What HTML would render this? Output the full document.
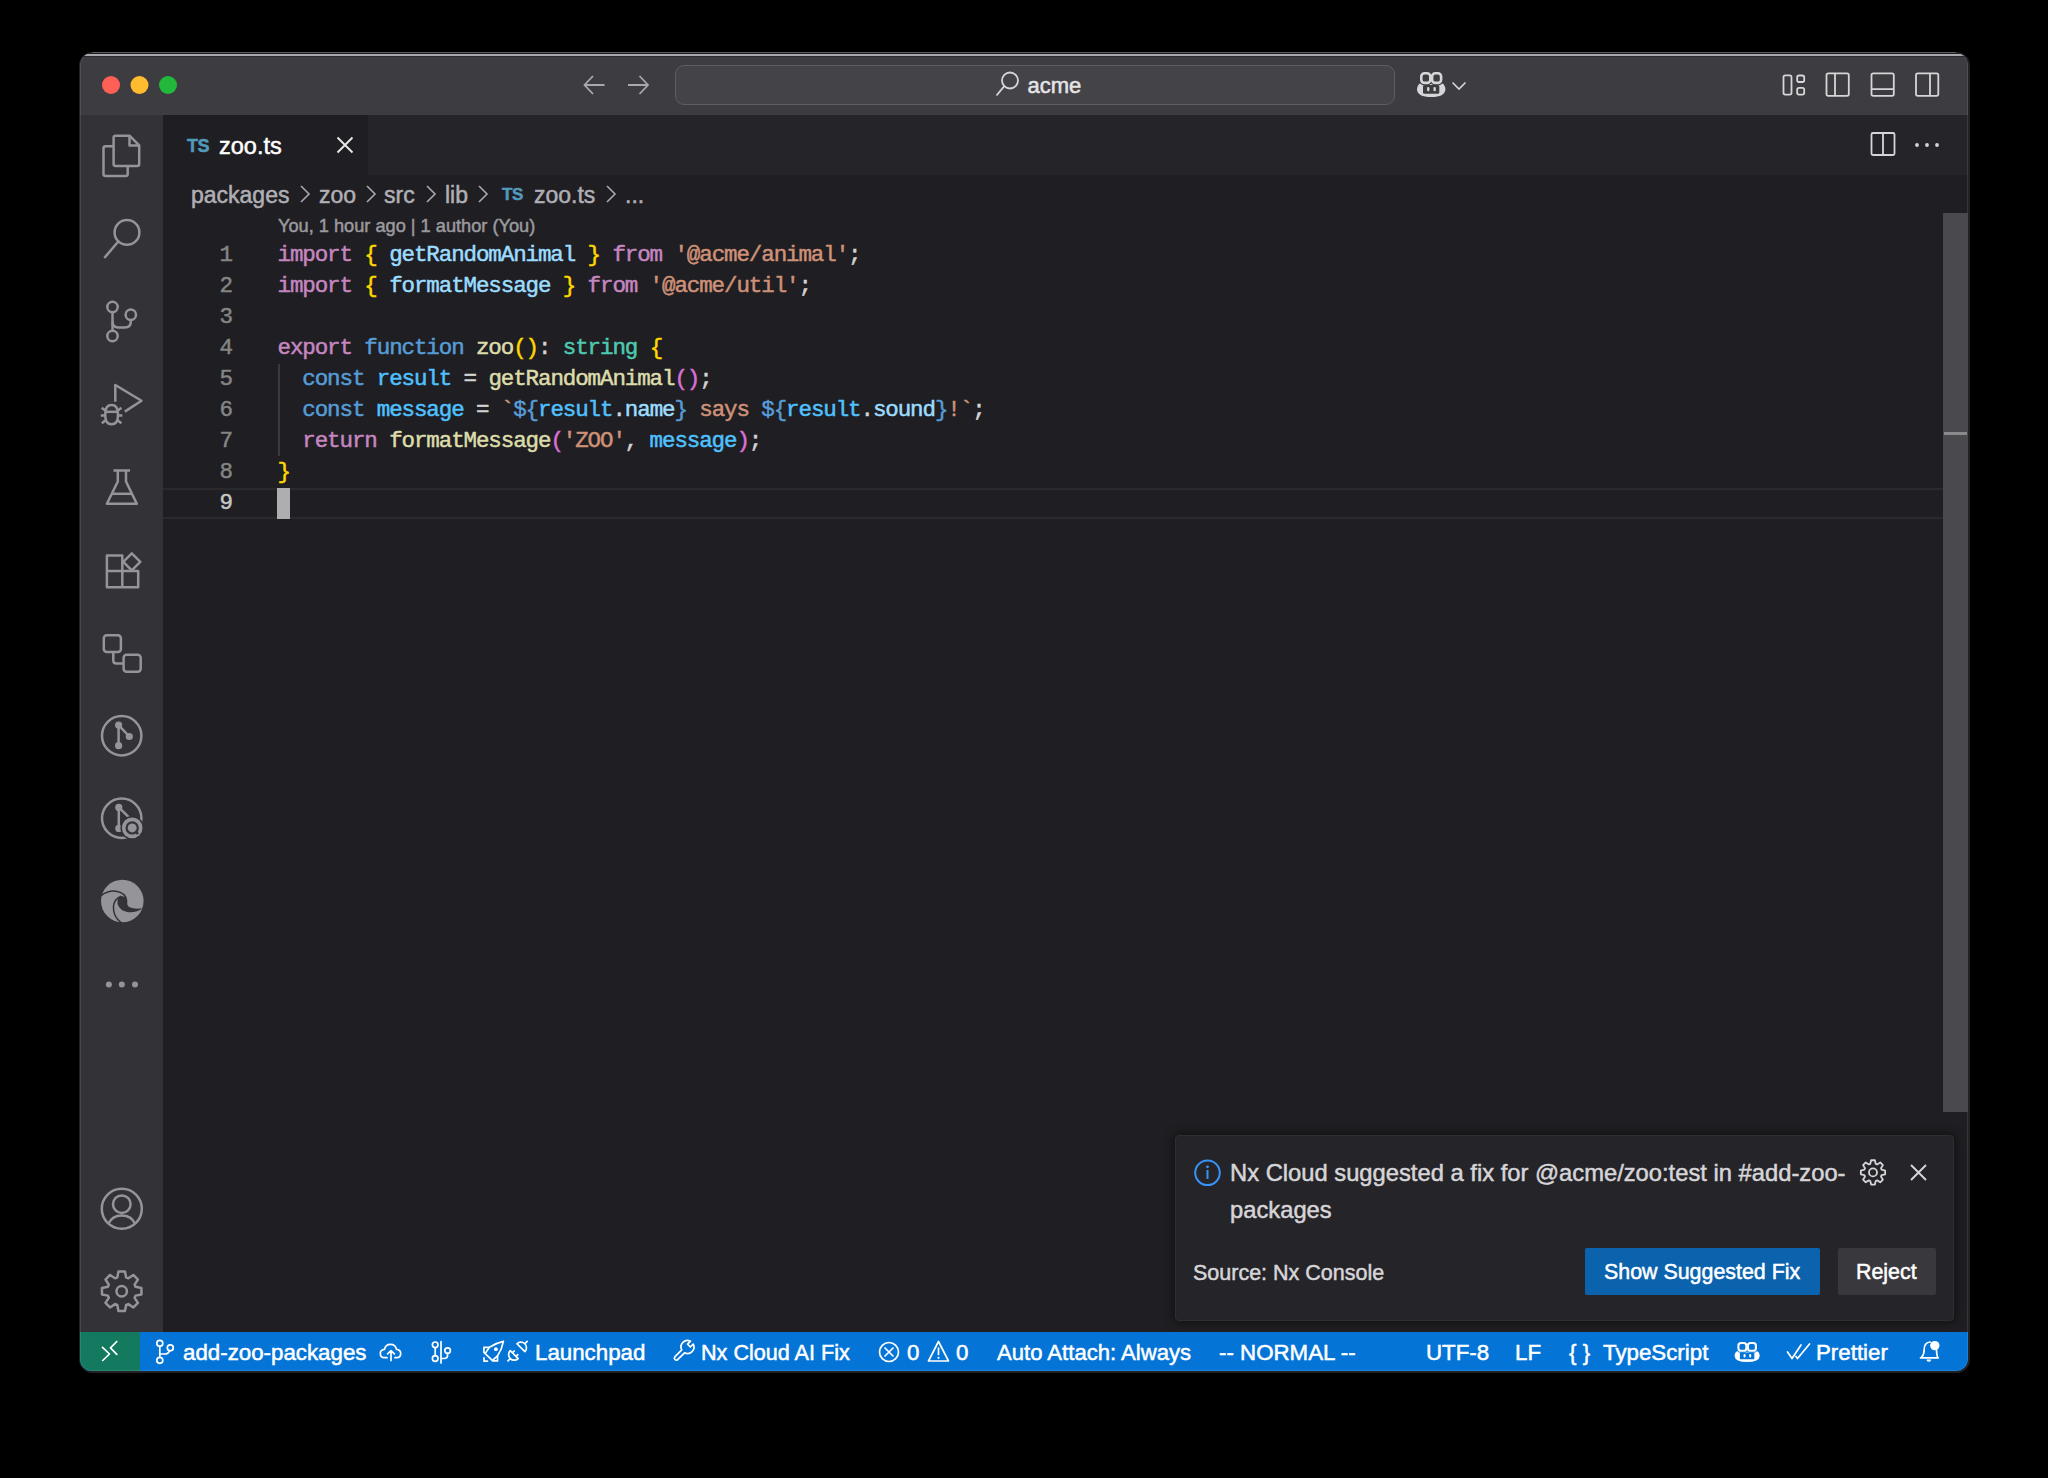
<!DOCTYPE html>
<html><head><meta charset="utf-8"><style>
*{margin:0;padding:0;box-sizing:border-box}
html,body{width:2048px;height:1478px;background:#000;overflow:hidden;font-family:"Liberation Sans",sans-serif;-webkit-text-stroke:0.5px}
.a{position:absolute}
#win{position:absolute;left:0;top:0;width:2048px;height:1478px;clip-path:inset(53px 80px 107px 80px round 12px);background:#1f1e22}
#title{left:80px;top:53px;width:1888px;height:62px;background:#3d3c40}
#act{left:80px;top:115px;width:83px;height:1217px;background:#333236}
#tabs{left:163px;top:115px;width:1805px;height:60px;background:#252428}
#tab{left:163px;top:115px;width:205px;height:60px;background:#1f1e22}
#status{left:80px;top:1332px;width:1888px;height:39px;background:#0474d6}
#remote{left:80px;top:1332px;width:60px;height:39px;background:#137a5f}
.t1{position:absolute;white-space:pre;line-height:1}
.code{position:absolute;left:277.5px;margin-top:0.2px;letter-spacing:-1.1px;font-family:"Liberation Mono",monospace;font-size:22.5px;line-height:31px;white-space:pre;color:#d4d4d4}
.ln{position:absolute;left:183px;margin-top:0.2px;width:50px;text-align:right;font-family:"Liberation Mono",monospace;font-size:22.5px;line-height:31px;color:#858585}
.k{color:#c586c0}.f{color:#dcdcaa}.v{color:#9cdcfe}.s{color:#ce9178}.b{color:#569cd6}.tt{color:#4ec9b0}.y{color:#ffd700}.o{color:#da70d6}.c{color:#4fc1ff}
.sb{position:absolute;top:1341.6px;font-size:22.3px;color:#fff;white-space:pre;line-height:1}
svg{position:absolute;left:0;top:0;overflow:visible}
</style></head><body>
<div class="a" style="left:78.5px;top:51.5px;width:1891px;height:1321px;border-radius:13.5px;background:#222124"></div>
<div class="a" style="left:92px;top:52px;width:1864px;height:1px;background:#5e5d61"></div>
<div id="win">
<div id="title" class="a"></div><div id="act" class="a"></div><div id="tabs" class="a"></div><div id="tab" class="a"></div><div id="status" class="a"></div><div id="remote" class="a"></div>
<div class="a" style="left:80px;top:53px;width:1888px;height:1318px;border-radius:12px;box-shadow:inset 0 0 0 1px rgba(255,255,255,0.10)"></div>
<div class="a" style="left:80px;top:53px;width:1888px;height:1px;background:#1c1b1e"></div><div class="a" style="left:80px;top:54px;width:1888px;height:2px;background:#a8a7ab"></div><div class="a" style="left:80px;top:56px;width:1888px;height:1px;background:#2c2b2e"></div>
<div class="a" style="left:675px;top:65px;width:720px;height:40px;border-radius:9px;border:1.5px solid #5e5d61;background:#444347"></div>
<div class="t1" style="left:1027.5px;top:75px;font-size:22px;color:#e6e5e8;">acme</div>
<div class="t1" style="left:187px;top:136.5px;font-size:18px;color:#519aba;font-weight:bold;letter-spacing:-0.6px">TS</div>
<div class="t1" style="left:219px;top:135px;font-size:23.5px;color:#ffffff;">zoo.ts</div>
<div class="t1" style="left:191px;top:183.7px;font-size:23px;color:#b0afb4;">packages</div>
<div class="t1" style="left:319px;top:183.7px;font-size:23px;color:#b0afb4;">zoo</div>
<div class="t1" style="left:384px;top:183.7px;font-size:23px;color:#b0afb4;">src</div>
<div class="t1" style="left:445px;top:183.7px;font-size:23px;color:#b0afb4;">lib</div>
<div class="t1" style="left:534px;top:183.7px;font-size:23px;color:#b0afb4;">zoo.ts</div>
<div class="t1" style="left:625px;top:183.7px;font-size:23px;color:#b0afb4;">...</div>
<div class="t1" style="left:502px;top:185.5px;font-size:17px;color:#519aba;font-weight:bold;letter-spacing:-0.5px">TS</div>
<div class="t1" style="left:278px;top:217px;font-size:18.2px;color:#9a999e;">You, 1 hour ago | 1 author (You)</div>
<div class="a" style="left:163px;top:488px;width:1780px;height:31px;border-top:2px solid #2a292d;border-bottom:2px solid #2a292d"></div>
<div class="a" style="left:277px;top:488px;width:13px;height:31px;background:#aeadb0"></div>
<div class="a" style="left:278px;top:364px;width:2px;height:92px;background:#3b3a3e"></div>
<div class="a" style="left:1943px;top:213px;width:25px;height:899px;background:#4a494d"></div>
<div class="a" style="left:1944px;top:432px;width:23px;height:3px;background:#8a898c"></div>
<div class="ln" style="top:240px">1<br>2<br>3<br>4<br>5<br>6<br>7<br>8<br><span style="color:#c6c6c6">9</span></div>
<div class="code" style="top:240px"><span class="k">import</span> <span class="y">{</span> <span class="v">getRandomAnimal</span> <span class="y">}</span> <span class="k">from</span> <span class="s">'@acme/animal'</span>;
<span class="k">import</span> <span class="y">{</span> <span class="v">formatMessage</span> <span class="y">}</span> <span class="k">from</span> <span class="s">'@acme/util'</span>;

<span class="k">export</span> <span class="b">function</span> <span class="f">zoo</span><span class="y">()</span>: <span class="tt">string</span> <span class="y">{</span>
  <span class="b">const</span> <span class="c">result</span> = <span class="f">getRandomAnimal</span><span class="o">()</span>;
  <span class="b">const</span> <span class="c">message</span> = <span class="s">`</span><span class="b">${</span><span class="c">result</span>.<span class="v">name</span><span class="b">}</span><span class="s"> says </span><span class="b">${</span><span class="c">result</span>.<span class="v">sound</span><span class="b">}</span><span class="s">!`</span>;
  <span class="k">return</span> <span class="f">formatMessage</span><span class="o">(</span><span class="s">'ZOO'</span>, <span class="c">message</span><span class="o">)</span>;
<span class="y">}</span>
</div>
<div class="sb" style="left:183px;">add-zoo-packages</div>
<div class="sb" style="left:535px;">Launchpad</div>
<div class="sb" style="left:701px;font-size:21.6px;top:1342.2px">Nx Cloud AI Fix</div>
<div class="sb" style="left:907px;">0</div>
<div class="sb" style="left:956px;">0</div>
<div class="sb" style="left:997px;font-size:22.1px;top:1341.8px">Auto Attach: Always</div>
<div class="sb" style="left:1219px;">-- NORMAL --</div>
<div class="sb" style="left:1426px;">UTF-8</div>
<div class="sb" style="left:1515px;">LF</div>
<div class="sb" style="left:1569px;">{ }</div>
<div class="sb" style="left:1603px;">TypeScript</div>
<div class="sb" style="left:1816px;">Prettier</div>
<div class="a" style="left:1175px;top:1135px;width:779px;height:186px;background:#252428;border-radius:4px;border:1px solid #2e2d31;box-shadow:0 0 10px 2px rgba(0,0,0,0.45)"></div>
<div class="t1" style="left:1230px;top:1161.2px;font-size:23.75px;color:#d6d5d8;">Nx Cloud suggested a fix for @acme/zoo:test in #add-zoo-</div>
<div class="t1" style="left:1230px;top:1198.3px;font-size:23.75px;color:#d6d5d8;">packages</div>
<div class="t1" style="left:1193px;top:1263px;font-size:21.5px;color:#d6d5d8;">Source: Nx Console</div>
<div class="a" style="left:1585px;top:1248px;width:235px;height:47px;background:#0b62ad;border-radius:2px"></div>
<div class="t1" style="left:1604px;top:1262px;font-size:21.4px;color:#fff;">Show Suggested Fix</div>
<div class="a" style="left:1838px;top:1248px;width:98px;height:47px;background:#39383d;border-radius:2px"></div>
<div class="t1" style="left:1856px;top:1262px;font-size:21.4px;color:#fff;">Reject</div>
<svg width="2048" height="1478" viewBox="0 0 2048 1478"><circle cx="111" cy="85" r="9" fill="#fe5f57"/><circle cx="139.5" cy="85" r="9" fill="#febc2e"/><circle cx="168" cy="85" r="9" fill="#22b83b"/>
<g fill="none" stroke="#a9a8ab" stroke-width="1.8"><path d="M604.5 85H584.5M593 76L584.5 85L593 94"/><path d="M628 85H648M639.5 76L648 85L639.5 94"/></g>
<g fill="none" stroke="#d6d5d8" stroke-width="1.8"><circle cx="1010" cy="80.5" r="8"/><path d="M1004.3 86.2L996.5 95.5"/></g>
<path d="M1420.50 83.00Q1417.00 85.00 1417.00 89.50Q1417.50 97.00 1431.20 97.00Q1444.90 97.00 1445.40 89.50Q1445.40 85.00 1441.90 83.00Z" fill="#d6d5d8"/>
<rect x="1423.00" y="85.00" width="16.30" height="8.70" rx="1.50" fill="#3d3c40"/>
<rect x="1427.10" y="87.00" width="2.30" height="4.30" rx="1.10" fill="#d6d5d8"/>
<rect x="1433.50" y="87.00" width="2.30" height="4.30" rx="1.10" fill="#d6d5d8"/>
<rect x="1421.30" y="73.30" width="9.00" height="9.60" rx="3.20" fill="#3d3c40" stroke="#3d3c40" stroke-width="5.20"/>
<rect x="1432.10" y="73.30" width="9.00" height="9.60" rx="3.20" fill="#3d3c40" stroke="#3d3c40" stroke-width="5.20"/>
<rect x="1421.30" y="73.30" width="9.00" height="9.60" rx="3.20" fill="none" stroke="#d6d5d8" stroke-width="2.60"/>
<rect x="1432.10" y="73.30" width="9.00" height="9.60" rx="3.20" fill="none" stroke="#d6d5d8" stroke-width="2.60"/>
<path d="M1452.5 82.5L1459 89L1465.5 82.5" fill="none" stroke="#d6d5d8" stroke-width="1.6"/>
<g fill="none" stroke="#d6d5d8" stroke-width="1.8">
<rect x="1783.5" y="75.3" width="8" height="19.3" rx="1.8"/><rect x="1797.2" y="75.5" width="7" height="6.5" rx="1.8"/><rect x="1797.2" y="87.8" width="7" height="6.8" rx="1.8"/>
<rect x="1826.5" y="73.4" width="22.3" height="22.4" rx="1.8"/><path d="M1835 73.4V95.8"/>
<rect x="1871.5" y="73.4" width="22.3" height="22.4" rx="1.8"/><path d="M1871.5 89.2H1893.8"/>
<rect x="1916" y="73.4" width="22.3" height="22.4" rx="1.8"/><path d="M1930 73.4V95.8"/>
<rect x="1871.5" y="133" width="23" height="22" rx="1.5"/><path d="M1883 133V155"/>
<path d="M1345.5 1345.5"/>
</g>
<g fill="#d6d5d8"><circle cx="1917" cy="145" r="1.9"/><circle cx="1927" cy="145" r="1.9"/><circle cx="1937" cy="145" r="1.9"/></g>
<path d="M337.5 137.5L352.5 152.5M352.5 137.5L337.5 152.5" stroke="#e8e8e8" stroke-width="1.9"/>
<path d="M301 186L309 194L301 202" fill="none" stroke="#a9a8ad" stroke-width="1.6"/>
<path d="M367 186L375 194L367 202" fill="none" stroke="#a9a8ad" stroke-width="1.6"/>
<path d="M427 186L435 194L427 202" fill="none" stroke="#a9a8ad" stroke-width="1.6"/>
<path d="M479 186L487 194L479 202" fill="none" stroke="#a9a8ad" stroke-width="1.6"/>
<path d="M607 186L615 194L607 202" fill="none" stroke="#a9a8ad" stroke-width="1.6"/>
<g fill="none" stroke="#959498" stroke-width="2.5" stroke-linejoin="round">
<path d="M113.6 146.3H105.5a2 2 0 0 0-2 2V174a2 2 0 0 0 2 2H125.7a2 2 0 0 0 2-2V166.1"/>
<path d="M115.6 135.7H129.5L139.2 145.4V164.1a2 2 0 0 1-2 2H115.6a2 2 0 0 1-2-2V137.7a2 2 0 0 1 2-2Z"/>
<path d="M129.5 135.7V145.4H139.2"/>
<circle cx="127" cy="232.4" r="12.4"/><path d="M118.3 241.5L104.3 258"/>
<circle cx="112.5" cy="307" r="5.2"/><circle cx="112.5" cy="336" r="5.2"/><circle cx="130.8" cy="314.7" r="5.2"/>
<path d="M112.5 312.2V330.8"/><path d="M130.8 319.9V321.5Q130.8 327.5 124.8 327.5H118.5Q112.5 327.5 112.5 321.5"/>
<path d="M115.3 401.7V385L141.5 400.7L124.8 411.6"/>
<path d="M105.3 413.5Q105.3 404.9 111.6 404.9Q117.9 404.9 117.9 413.5V416Q117.9 424.3 111.6 424.3Q105.3 424.3 105.3 416Z"/>
<path d="M105.5 411.8H117.7"/>
<path d="M101.8 407.8L105.3 410.6M121.4 407.8L117.9 410.6M100.8 415.5H105M118.2 415.5H122.4M101.8 423.3L105.3 420.5M121.4 423.3L117.9 420.5"/>
<path d="M113.5 470.6H130M117.8 470.6V481.5L106.9 503.7H136.8L126 481.5V470.6"/><path d="M111.8 493.8H132"/>
<path d="M106.9 555.5H122.3V587.2H106.9ZM106.9 570.9H138.2V587.2H122.3"/><path d="M131.8 553.3L140.3 561.8L131.8 570.3L123.3 561.8Z"/>
<rect x="103.8" y="635.2" width="17.1" height="16.8" rx="3"/><rect x="123.6" y="654.7" width="17.1" height="17.1" rx="3"/>
<path d="M113.3 652V660.5Q113.3 663.5 116.3 663.5H123.6"/>
<circle cx="121.7" cy="735.8" r="19.7"/><path d="M118.6 725.1V745.7M118.6 725.1L129.3 736.5"/>
<circle cx="121.7" cy="818.3" r="19.7"/><path d="M118.8 807.4V828.4M118.8 807.4L129 817.4"/>
<circle cx="121.8" cy="1208.7" r="20"/><circle cx="121.8" cy="1204.2" r="8.8"/>
<path d="M108.5 1223.8Q112 1215.5 121.8 1215.5Q131.5 1215.5 135 1223.8"/>
<path d="M117.27 1277.39L118.46 1271.46L124.94 1271.46L126.13 1277.39L128.33 1278.31L133.37 1274.96L137.94 1279.53L134.59 1284.57L135.51 1286.77L141.44 1287.96L141.44 1294.44L135.51 1295.63L134.59 1297.83L137.94 1302.87L133.37 1307.44L128.33 1304.09L126.13 1305.01L124.94 1310.94L118.46 1310.94L117.27 1305.01L115.07 1304.09L110.03 1307.44L105.46 1302.87L108.81 1297.83L107.89 1295.63L101.96 1294.44L101.96 1287.96L107.89 1286.77L108.81 1284.57L105.46 1279.53L110.03 1274.96L115.07 1278.31Z"/><circle cx="121.7" cy="1291.2" r="5.2"/>
</g>
<g fill="#959498">
<circle cx="118.6" cy="725.1" r="3.6"/><circle cx="129.3" cy="736.5" r="3.6"/><circle cx="118.6" cy="745.7" r="3.6"/>
<circle cx="118.8" cy="807.4" r="3.6"/><circle cx="118.8" cy="828.4" r="3.6"/>
<circle cx="108.9" cy="984.4" r="3"/><circle cx="121.8" cy="984.4" r="3"/><circle cx="135" cy="984.4" r="3"/>
<circle cx="122.3" cy="901" r="21.3"/>
</g>
<circle cx="132.2" cy="827.9" r="11.8" fill="#333236"/><circle cx="132.2" cy="827.9" r="10.3" fill="#959498"/><circle cx="132.2" cy="827.9" r="5.6" fill="none" stroke="#333236" stroke-width="2.2"/><circle cx="137.3" cy="833.3" r="1.3" fill="#333236"/>
<path d="M100.8 895.8Q108 890.3 116 891.2Q125.5 892.5 126.6 900.5Q126.8 903.5 125.8 905.8" fill="none" stroke="#333236" stroke-width="1.5"/>
<path d="M121.2 896.3Q114 899 113.4 907Q113.3 917 121.6 923.2" fill="none" stroke="#333236" stroke-width="1.5"/>
<path d="M121.2 896.2Q126.2 896 126.6 901Q126.8 905.5 129.5 907.3Q134 909.3 142.8 908.3Q136.5 912.8 128.5 912.2Q120 911.2 117.6 904Q116.6 898 121.2 896.2Z" fill="#333236"/>
<g fill="none" stroke="#ffffff" stroke-width="1.7" stroke-linejoin="round" stroke-linecap="round">
<path d="M102.5 1347.3L109.5 1354L102.7 1360.5M116.8 1341.5L110.5 1347.8L116.8 1354.4"/>
<circle cx="159.8" cy="1343.3" r="3"/><circle cx="159.8" cy="1360.3" r="3"/><circle cx="170.3" cy="1347.8" r="3"/>
<path d="M159.8 1346.3V1357.3M169.5 1350.7Q168.5 1354 164.5 1354H159.8"/>
<path d="M387 1357.7H384.5Q380.3 1357.7 380.3 1353.5Q380.3 1349.5 384.5 1349.3Q385.5 1344.3 390.5 1344.3Q395.5 1344.3 396.5 1349.3Q400.7 1349.5 400.7 1353.5Q400.7 1357.7 396.5 1357.7H395"/>
<path d="M391 1350.6V1360.6M387.6 1353.9L391 1350.6L394.4 1353.9"/>
<circle cx="435.2" cy="1344.8" r="2.8"/><circle cx="435.2" cy="1358.5" r="2.8"/><circle cx="447.6" cy="1350.6" r="2.8"/>
<path d="M435.2 1347.6V1355.7M441 1341.5V1363M447.6 1353.4V1355Q447.6 1358.5 444 1358.5H441"/>
<path d="M503.4 1341.3Q496 1342.8 489.3 1347.4H483.9V1352.3L492.8 1360.9H497.5V1356Q502 1349 503.4 1341.3Z"/>
<path d="M489.3 1347.4L485.8 1352.6M497.5 1356L492.4 1360.4"/>
<path d="M484 1357.8V1361.2H487.4"/>
<path d="M510.24 1350.64A5.6 5.6 0 0 0 518.16 1358.56ZM512.42 1352.82l1.8 -1.8M515.98 1356.38l1.8 -1.8M510.24 1358.56L507.94 1360.86"/>
<path d="M516.94 1343.74A5.6 5.6 0 0 1 524.86 1351.66ZM524.86 1343.74L527.16 1341.44"/>
<path d="M677.6 1359.7L684.54 1352.78A6.5 6.5 0 0 0 693.28 1344.04L690.32 1347L687.5 1344.18L690.46 1341.22A6.5 6.5 0 0 0 681.72 1349.96L674.8 1356.9A2 2 0 0 0 677.6 1359.7Z"/>
<circle cx="889" cy="1352" r="9.5"/><path d="M885 1348L893 1356M893 1348L885 1356"/>
<path d="M938.5 1341.5L948.5 1361H928.5Z"/><path d="M938.5 1348V1354.5"/>
<path d="M1787.5 1352L1792 1358.5L1801 1345M1796 1356.5L1797.5 1358.5L1809.5 1344"/>
<path d="M1920.5 1357.8H1938.3M1921.5 1357.4Q1924.2 1354.5 1924.2 1349.5Q1924.2 1342.5 1930.2 1342M1936.5 1350Q1936.6 1355 1937.6 1357.3"/>
</g>
<circle cx="938.5" cy="1357.8" r="1.1" fill="#ffffff"/><circle cx="495.9" cy="1349.2" r="1.9" fill="#ffffff"/>
<circle cx="1934.8" cy="1345.6" r="4.7" fill="#ffffff"/><path d="M1926.4 1359.4A2.4 2.4 0 0 0 1931.2 1359.4Z" fill="#ffffff"/>
<path d="M1737.69 1350.80Q1734.60 1352.40 1734.60 1356.00Q1735.04 1362.00 1747.15 1362.00Q1759.26 1362.00 1759.70 1356.00Q1759.70 1352.40 1756.61 1350.80Z" fill="#ffffff"/>
<rect x="1739.90" y="1352.40" width="14.41" height="6.96" rx="1.20" fill="#0474d6"/>
<rect x="1743.53" y="1354.00" width="2.03" height="3.44" rx="0.88" fill="#ffffff"/>
<rect x="1749.18" y="1354.00" width="2.03" height="3.44" rx="0.88" fill="#ffffff"/>
<rect x="1738.40" y="1343.04" width="7.95" height="7.68" rx="2.56" fill="#0474d6" stroke="#0474d6" stroke-width="4.16"/>
<rect x="1747.95" y="1343.04" width="7.95" height="7.68" rx="2.56" fill="#0474d6" stroke="#0474d6" stroke-width="4.16"/>
<rect x="1738.40" y="1343.04" width="7.95" height="7.68" rx="2.56" fill="none" stroke="#ffffff" stroke-width="2.08"/>
<rect x="1747.95" y="1343.04" width="7.95" height="7.68" rx="2.56" fill="none" stroke="#ffffff" stroke-width="2.08"/>
<g fill="none" stroke="#3794ff" stroke-width="2"><circle cx="1207.5" cy="1172.8" r="12.3"/><path d="M1207.5 1170V1179"/></g><circle cx="1207.5" cy="1166.8" r="1.4" fill="#3794ff"/>
<g fill="none" stroke="#d6d5d8" stroke-width="1.8" stroke-linejoin="round"><path d="M1870.29 1163.82L1871.11 1160.25L1874.89 1160.25L1875.71 1163.82L1877.15 1164.42L1880.26 1162.47L1882.93 1165.14L1880.98 1168.25L1881.58 1169.69L1885.15 1170.51L1885.15 1174.29L1881.58 1175.11L1880.98 1176.55L1882.93 1179.66L1880.26 1182.33L1877.15 1180.38L1875.71 1180.98L1874.89 1184.55L1871.11 1184.55L1870.29 1180.98L1868.85 1180.38L1865.74 1182.33L1863.07 1179.66L1865.02 1176.55L1864.42 1175.11L1860.85 1174.29L1860.85 1170.51L1864.42 1169.69L1865.02 1168.25L1863.07 1165.14L1865.74 1162.47L1868.85 1164.42Z"/><circle cx="1873" cy="1172.4" r="4"/></g>
<path d="M1911 1165L1926 1180M1926 1165L1911 1180" stroke="#d6d5d8" stroke-width="1.9"/></svg>
</div>
</body></html>
